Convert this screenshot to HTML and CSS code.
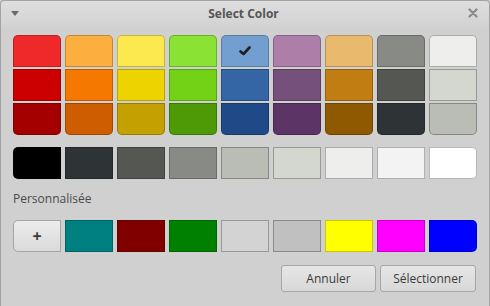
FILE: index.html
```html
<!DOCTYPE html>
<html lang="fr">
<head>
    <meta charset="UTF-8">
    <title>Select Color</title>
    <link rel="stylesheet" href="styles.css">
</head>
<body>
    <div class="window">
        <div class="titlebar">
            <span class="menu-arrow"></span>
            <span class="title">Select Color</span>
            <svg class="close" width="10" height="10" viewBox="0 0 10 10">
                <path d="M1.5 1.5 L8.5 8.5 M8.5 1.5 L1.5 8.5" stroke="#8a8a8a" stroke-width="2.2" stroke-linecap="round"/>
            </svg>
        </div>

        <div class="content">
            <div class="palette">
                <div class="column">
                    <div class="swatch" style="background:#ef2929"></div>
                    <div class="swatch" style="background:#cc0000"></div>
                    <div class="swatch" style="background:#a40000"></div>
                </div>
                <div class="column">
                    <div class="swatch" style="background:#fcaf3e"></div>
                    <div class="swatch" style="background:#f57900"></div>
                    <div class="swatch" style="background:#ce5c00"></div>
                </div>
                <div class="column">
                    <div class="swatch" style="background:#fce94f"></div>
                    <div class="swatch" style="background:#edd400"></div>
                    <div class="swatch" style="background:#c4a000"></div>
                </div>
                <div class="column">
                    <div class="swatch" style="background:#8ae234"></div>
                    <div class="swatch" style="background:#73d216"></div>
                    <div class="swatch" style="background:#4e9a06"></div>
                </div>
                <div class="column">
                    <div class="swatch selected" style="background:#729fcf">
                        <svg width="12" height="10" viewBox="0 0 12 10">
                            <path d="M1.5 5.5 L4.5 8 L10.5 1.5" fill="none" stroke="#1e1e1e" stroke-width="2.6" stroke-linejoin="round" stroke-linecap="round"/>
                        </svg>
                    </div>
                    <div class="swatch" style="background:#3465a4"></div>
                    <div class="swatch" style="background:#204a87"></div>
                </div>
                <div class="column">
                    <div class="swatch" style="background:#ad7fa8"></div>
                    <div class="swatch" style="background:#75507b"></div>
                    <div class="swatch" style="background:#5c3566"></div>
                </div>
                <div class="column">
                    <div class="swatch" style="background:#e9b96e"></div>
                    <div class="swatch" style="background:#c17d11"></div>
                    <div class="swatch" style="background:#8f5902"></div>
                </div>
                <div class="column">
                    <div class="swatch" style="background:#888a85"></div>
                    <div class="swatch" style="background:#555753"></div>
                    <div class="swatch" style="background:#2e3436"></div>
                </div>
                <div class="column light">
                    <div class="swatch" style="background:#eeeeec"></div>
                    <div class="swatch" style="background:#d3d7cf"></div>
                    <div class="swatch" style="background:#babdb6"></div>
                </div>
            </div>

            <div class="row grays">
                <div class="swatch" style="background:#000000"></div>
                <div class="swatch" style="background:#2e3436"></div>
                <div class="swatch" style="background:#555753"></div>
                <div class="swatch" style="background:#888a85"></div>
                <div class="swatch light" style="background:#babdb6"></div>
                <div class="swatch light" style="background:#d3d7cf"></div>
                <div class="swatch light" style="background:#eeeeec"></div>
                <div class="swatch light" style="background:#f3f3f3"></div>
                <div class="swatch light" style="background:#ffffff"></div>
            </div>

            <div class="section-label">Personnalisée</div>

            <div class="row custom">
                <button class="swatch add">+</button>
                <div class="swatch" style="background:#008080"></div>
                <div class="swatch" style="background:#800000"></div>
                <div class="swatch" style="background:#008000"></div>
                <div class="swatch light" style="background:#d3d3d3"></div>
                <div class="swatch light" style="background:#c0c0c0"></div>
                <div class="swatch" style="background:#ffff00"></div>
                <div class="swatch" style="background:#ff00ff"></div>
                <div class="swatch" style="background:#0000ff"></div>
            </div>

            <div class="actions">
                <button class="btn">Annuler</button>
                <button class="btn">Sélectionner</button>
            </div>
        </div>
    </div>
</body>
</html>
```

FILE: styles.css
```css
/* Global */
* {
    margin: 0;
    padding: 0;
    box-sizing: border-box;
}

body {
    background: #d0d0d0;
    font-family: 'Open Sans', 'Noto Sans', sans-serif;
    width: 490px;
    height: 306px;
    overflow: hidden;
}

/* Window */
.window {
    width: 490px;
    height: 306px;
    background: #d0d0d0;
    border: 1px solid #a2a2a2;
    border-bottom: none;
    border-radius: 4px 4px 0 0;
}

/* Title bar */
.titlebar {
    height: 27px;
    display: flex;
    align-items: center;
    justify-content: space-between;
    padding: 0 10px 3px 10px;
    background: linear-gradient(#dedede, #d2d2d2);
    border-radius: 4px 4px 0 0;
}

.menu-arrow {
    width: 0;
    height: 0;
    border-left: 4px solid transparent;
    border-right: 4px solid transparent;
    border-top: 5px solid #6a6a6a;
    margin-left: 0;
}

.title {
    font-size: 12px;
    font-weight: bold;
    color: #555555;
}

.close {
    margin-right: 1px;
}

/* Content */
.content {
    padding: 7px 12px 0 12px;
}

.palette {
    display: flex;
    gap: 4px;
}

.column {
    display: flex;
    flex-direction: column;
    gap: 2px;
}

.swatch {
    width: 48px;
    height: 32px;
    border: 1px solid rgba(0, 0, 0, 0.22);
}

.swatch.light,
.column.light .swatch {
    border-color: rgba(0, 0, 0, 0.28);
}

.column .swatch:first-child {
    border-radius: 5px 5px 0 0;
}

.column .swatch:last-child {
    border-radius: 0 0 5px 5px;
}

.selected {
    display: flex;
    align-items: center;
    justify-content: center;
}

/* Horizontal rows */
.row {
    display: flex;
    gap: 4px;
}

.row .swatch:first-child {
    border-radius: 5px 0 0 5px;
}

.row .swatch:last-child {
    border-radius: 0 5px 5px 0;
}

.grays {
    margin-top: 12px;
}

.section-label {
    margin-top: 12px;
    height: 16px;
    line-height: 16px;
    font-size: 12px;
    color: #4a4a4a;
}

.custom {
    margin-top: 13px;
}

.add {
    background: linear-gradient(#ececec, #dadada);
    border: 1px solid #a4a4a4;
    font-family: 'Open Sans', sans-serif;
    font-size: 16px;
    font-weight: bold;
    color: #3a3a3a;
    line-height: 28px;
}

/* Dialog buttons */
.actions {
    display: flex;
    justify-content: flex-end;
    gap: 4px;
    margin-top: 13px;
    padding-right: 1px;
}

.btn {
    height: 27px;
    width: 95px;
    background: linear-gradient(#e6e6e6, #d8d8d8);
    border: 1px solid #a6a6a6;
    border-radius: 3px;
    font-family: 'Open Sans', sans-serif;
    font-size: 12px;
    color: #3a3a3a;
}

.btn:last-child {
    width: 96px;
}
```
